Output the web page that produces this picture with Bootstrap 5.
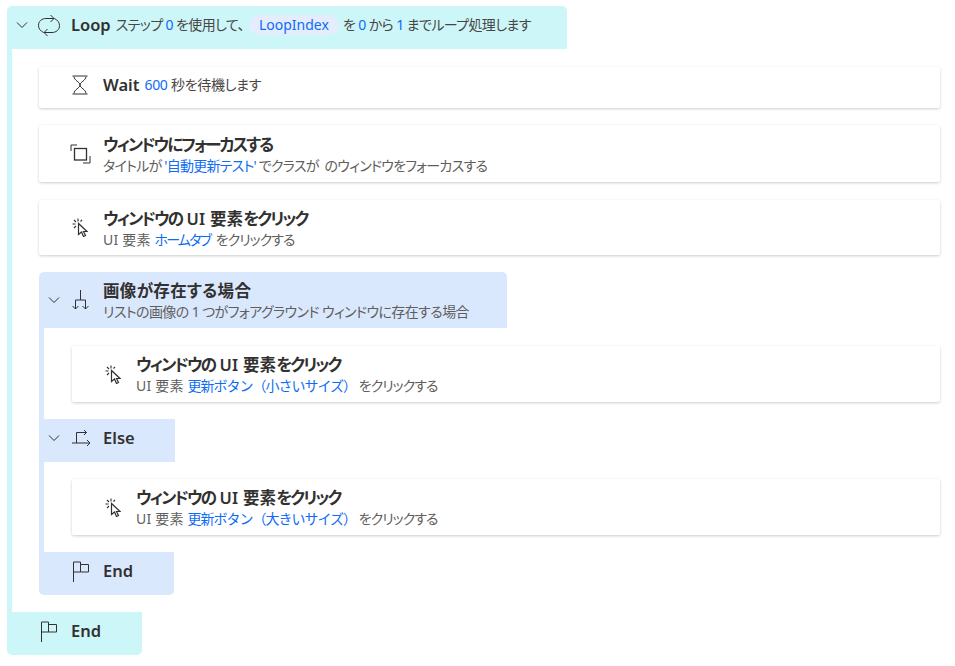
<!DOCTYPE html>
<html lang="ja">
<head>
<meta charset="utf-8">
<title>Flow</title>
<link href="https://cdn.jsdelivr.net/npm/bootstrap@5.3.0/dist/css/bootstrap.min.css" rel="stylesheet">
<style>
body{font-family:"Noto Sans","Noto Sans CJK JP",sans-serif;font-feature-settings:"palt";color:#323130;background:#fff;font-size:14px;line-height:18px}
.flow{padding:6px 15px 0 7px}
.head{height:43px;flex:none}
.lift{padding-bottom:5px}
.teal{background:#cdf6f9}
.azure{background:#dae8fe}
.top-round{border-radius:5px 5px 0 0}
.bot-round{border-radius:0 0 5px 5px}
.tw-loop{width:560px}
.tw-end{width:135px}
.tw-if{width:468px;height:56px;margin-top:17px}
.tw-else{width:136px}
.tw-iend{width:135px}
.rail-teal{border-left:5px solid #cdf6f9;padding:18px 0 17px 27px}
.rail-azure{border-left:5px solid #dae8fe;padding:18px 0 17px 28px}
.rail-tight{padding-top:17px}
.chev{width:32px;flex:none;padding-left:9px;display:flex}
.ico{width:32px;flex:none;display:flex;justify-content:center;margin-left:-6px;margin-right:6px}
.step{background:#fff;border-radius:2px;box-shadow:0 1px 3px rgba(0,0,0,.2)}
.step-one{height:41px}
.step-focus{height:57px}
.step-click{height:55px;margin-top:18px}
.step-two{height:56px}
.gap-a{margin-top:17px}
.slot{width:64px;flex:none;display:flex;justify-content:center;padding-left:21px;padding-right:3px}
.ttl{font-size:16.5px;font-weight:600;line-height:22px;color:#323130}
.ttl-kana{letter-spacing:-2px}
.ttl-mix{letter-spacing:-1.9px}
.ttl-kanji{letter-spacing:.3px}
.sub{font-size:14px;line-height:17px;color:#605e5c;margin-top:1px;letter-spacing:-.75px}
.sub-long{letter-spacing:-.6px}
.sub-click{letter-spacing:-1px}
.lat{letter-spacing:.2px}
.lat-sub{letter-spacing:.2px}
.desc{font-size:14px;color:#484644;margin-left:5px;letter-spacing:-.6px}
.desc-wait{letter-spacing:-.3px}
.val{color:#0f6cf5}
.val-short{letter-spacing:-1.8px;margin-right:3px}
.chip{background:#e3edfd;border-radius:10px;padding:1px 10px;margin:0 4px 0 5px;display:inline-block;line-height:18px;letter-spacing:0}
.fw{font-feature-settings:normal}
svg{display:block;fill:none;stroke:#323130;stroke-width:1}
</style>
</head>
<body>
<div class="flow">

  <div class="head lift teal top-round tw-loop d-flex align-items-center">
    <div class="chev"><svg width="12" height="12" viewBox="0 0 12 12"><path d="M1 3.500l5 5 5-5"/></svg></div>
    <div class="ico"><svg width="24" height="24" viewBox="0 0 24 24"><path d="M6.500 19.500C3.500 18 1.500 15.500 1.500 12.500 1.500 8 5 5.500 9 5.500h8"/><path d="M13.500 2l3.500 3.500L13.500 9"/><path d="M17.500 5.500c3 1.500 5 4 5 7 0 4.500-3.500 7-7.500 7H7"/><path d="M10.500 16L7 19.500l3.500 3.500"/></svg></div>
    <span class="ttl">Loop</span>
    <span class="desc">ステップ <span class="val">0</span> を使用して、<span class="val chip">LoopIndex</span>を <span class="val">0</span> から <span class="val">1</span> までループ処理します</span>
  </div>

  <div class="rail-teal">
    <div class="step step-one lift d-flex align-items-center">
      <div class="slot"><svg width="18" height="20" viewBox="0 0 18 20"><path d="M1.500 1h15M1.500 19h15M3 1.500c0 4 6 5.500 6 8.500S3 14.500 3 18.500M15 1.500c0 4-6 5.500-6 8.500s6 4.500 6 8.500"/></svg></div>
      <span class="ttl">Wait</span><span class="desc desc-wait"><span class="val">600</span> 秒を待機します</span>
    </div>

    <div class="step step-focus gap-a d-flex align-items-center">
      <div class="slot"><svg width="21" height="20" viewBox="0 0 21 20"><path d="M7 1H1v6M20 12v7h-7"/><rect x="4.500" y="4.500" width="12" height="11.500" stroke-width="1.300"/></svg></div>
      <div><div class="ttl ttl-kana">ウィンドウにフォーカスする</div><div class="sub">タイトルが <span class="val">'自動更新テスト'</span> でクラスが &nbsp;のウィンドウをフォーカスする</div></div>
    </div>

    <div class="step step-click d-flex align-items-center">
      <div class="slot"><svg width="16" height="19" viewBox="0 0 16 19"><path d="M6.500 5.500v11l3-2.500 2 4.500 2-1-2-4h3.500z" stroke-width="1.200"/><path d="M6 .5v3M.5 6h3M2 2l2 2M10 2L8.500 3.500M2 10l2-2" stroke-width="1.100"/></svg></div>
      <div><div class="ttl ttl-mix">ウィンドウの<span class="lat"> UI 要素</span>をクリック</div><div class="sub sub-click"><span class="lat-sub">UI 要素 </span><span class="val val-short">ホームタブ</span> をクリックする</div></div>
    </div>

    <div class="head azure top-round tw-if d-flex align-items-center">
      <div class="chev"><svg width="12" height="12" viewBox="0 0 12 12"><path d="M1 3.500l5 5 5-5"/></svg></div>
      <div class="ico"><svg width="18" height="20" viewBox="0 0 18 20"><path d="M8.500 0v10M3.500 10h10M3.500 10v9M13.500 10v9M.5 16l3 3 3-3M10.500 16l3 3 3-3"/></svg></div>
      <div><div class="ttl ttl-kanji">画像が存在する場合</div><div class="sub sub-long">リストの画像の 1 つがフォアグラウンド ウィンドウに存在する場合</div></div>
    </div>

    <div class="rail-azure">
      <div class="step step-two d-flex align-items-center">
        <div class="slot"><svg width="16" height="19" viewBox="0 0 16 19"><path d="M6.500 5.500v11l3-2.500 2 4.500 2-1-2-4h3.500z" stroke-width="1.200"/><path d="M6 .5v3M.5 6h3M2 2l2 2M10 2L8.500 3.500M2 10l2-2" stroke-width="1.100"/></svg></div>
        <div><div class="ttl ttl-mix">ウィンドウの<span class="lat"> UI 要素</span>をクリック</div><div class="sub sub-click"><span class="lat-sub">UI 要素 </span><span class="val fw">更新ボタン（小さいサイズ）</span> をクリックする</div></div>
      </div>
    </div>

    <div class="head lift azure tw-else d-flex align-items-center">
      <div class="chev"><svg width="12" height="12" viewBox="0 0 12 12"><path d="M1 3.500l5 5 5-5"/></svg></div>
      <div class="ico"><svg width="19" height="18" viewBox="0 0 19 18"><path d="M0 14h18M15 11l3 3-3 3M4.500 14V3.500h10M12 1l2.500 2.500L12 6"/></svg></div>
      <span class="ttl">Else</span>
    </div>

    <div class="rail-azure rail-tight">
      <div class="step step-two d-flex align-items-center">
        <div class="slot"><svg width="16" height="19" viewBox="0 0 16 19"><path d="M6.500 5.500v11l3-2.500 2 4.500 2-1-2-4h3.500z" stroke-width="1.200"/><path d="M6 .5v3M.5 6h3M2 2l2 2M10 2L8.500 3.500M2 10l2-2" stroke-width="1.100"/></svg></div>
        <div><div class="ttl ttl-mix">ウィンドウの<span class="lat"> UI 要素</span>をクリック</div><div class="sub sub-click"><span class="lat-sub">UI 要素 </span><span class="val fw">更新ボタン（大きいサイズ）</span> をクリックする</div></div>
      </div>
    </div>

    <div class="head lift azure bot-round tw-iend d-flex align-items-center">
      <div class="chev"></div>
      <div class="ico"><svg width="18" height="21" viewBox="0 0 18 21"><path d="M1.500 1v20M1.500 1h7v10h-7M8.500 3.500h8V11h-8"/></svg></div>
      <span class="ttl">End</span>
    </div>
  </div>

  <div class="head lift teal bot-round tw-end d-flex align-items-center">
    <div class="chev"></div>
    <div class="ico"><svg width="18" height="21" viewBox="0 0 18 21"><path d="M1.500 1v20M1.500 1h7v10h-7M8.500 3.500h8V11h-8"/></svg></div>
    <span class="ttl">End</span>
  </div>
</div>
<script src="https://cdn.jsdelivr.net/npm/bootstrap@5.3.0/dist/js/bootstrap.bundle.min.js"></script>
</body>
</html>
